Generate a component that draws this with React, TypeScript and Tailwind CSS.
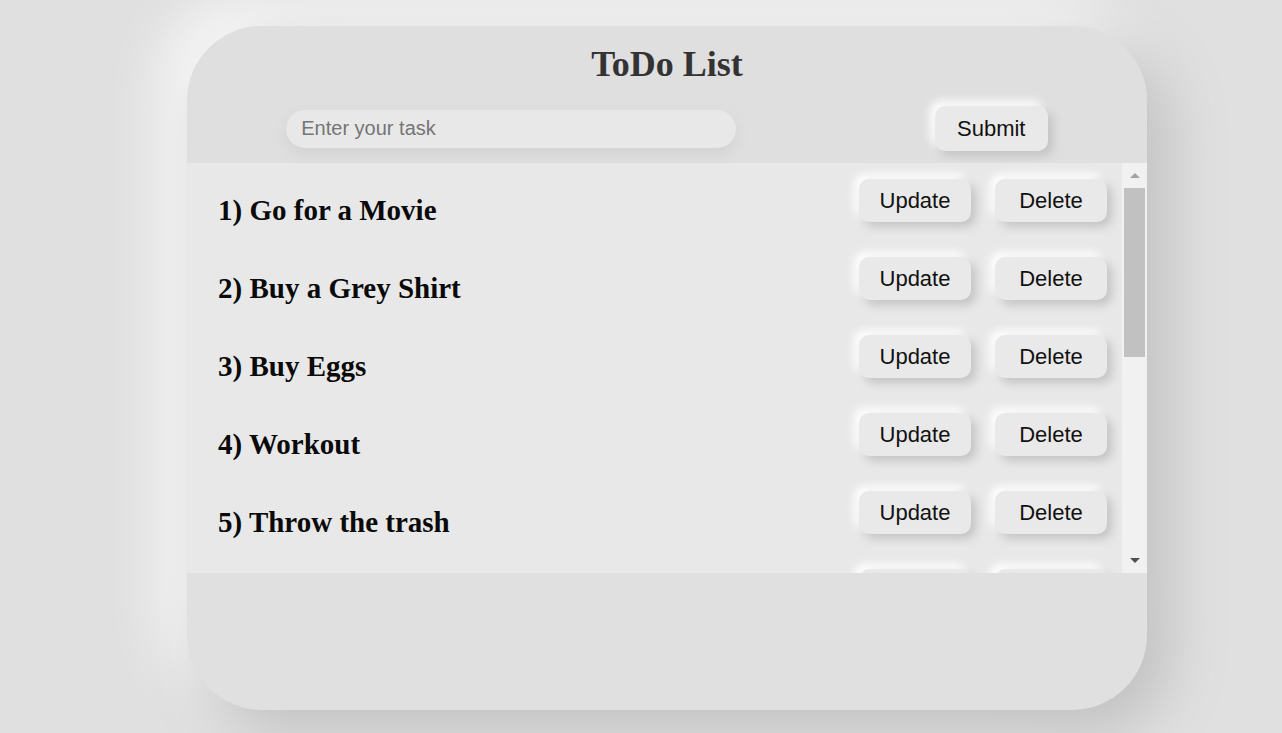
import React from "react";

const tasks = [
  "Go for a Movie",
  "Buy a Grey Shirt",
  "Buy Eggs",
  "Workout",
  "Throw the trash",
  "Read a Book",
];

function TaskRow({ n, text }: { n: number; text: string }) {
  return (
    <li className="flex h-[78px] shrink-0 justify-between pl-[31px] pr-[15px]">
      <h3 className="pt-[31px] font-['Liberation_Serif',serif] text-[29px] font-bold leading-[32px] text-[#0a0a0a]">
        {n}) {text}
      </h3>
      <div className="flex gap-[24px] pt-[16px]">
        <button className="h-[43px] w-[112px] rounded-[10px] bg-[#e9e9e9] font-['Liberation_Sans',sans-serif] text-[22px] text-[#111] shadow-[5px_5px_10px_#c4c4c4,-5px_-5px_10px_#ffffff]">
          Update
        </button>
        <button className="h-[43px] w-[112px] rounded-[10px] bg-[#e9e9e9] font-['Liberation_Sans',sans-serif] text-[22px] text-[#111] shadow-[5px_5px_10px_#c4c4c4,-5px_-5px_10px_#ffffff]">
          Delete
        </button>
      </div>
    </li>
  );
}

export default function App() {
  return (
    <div className="h-[733px] overflow-hidden bg-[#e0e0e0] pt-[26px]">
      <div className="ml-[187px] flex h-[684px] w-[960px] flex-col overflow-hidden rounded-[75px] bg-[#e0e0e0] shadow-[20px_20px_60px_#bebebe,-20px_-20px_60px_#ffffff]">
        {/* header */}
        <div className="flex flex-col bg-[#dfdfdf] pb-[12px] pt-[18px]">
          <h1 className="text-center font-['Liberation_Serif',serif] text-[36px] font-bold leading-[40px] text-[#333]">
            ToDo List
          </h1>
          <div className="mt-[22px] flex h-[45px] items-center justify-around">
            <input
              className="h-[38px] w-[450px] rounded-full bg-[#e8e8e8] px-[15px] font-['Liberation_Sans',sans-serif] text-[20px] text-[#222] shadow-[0_6px_14px_#d2d2d2] outline-none placeholder:text-[#757575]"
              placeholder="Enter your task"
            />
            <button className="h-[45px] w-[113px] rounded-[10px] bg-[#e9e9e9] font-['Liberation_Sans',sans-serif] text-[22px] text-[#111] shadow-[5px_5px_10px_#c4c4c4,-5px_-5px_10px_#ffffff]">
              Submit
            </button>
          </div>
        </div>

        {/* list + scrollbar */}
        <div className="flex h-[410px] bg-[#e8e8e8]">
          <ul className="flex flex-1 flex-col overflow-hidden">
            {tasks.map((t, i) => (
              <TaskRow key={t} n={i + 1} text={t} />
            ))}
          </ul>
          <div className="flex w-[25px] flex-col items-center bg-[#f1f1f1]">
            <div className="mt-[10px] h-0 w-0 border-x-[5px] border-b-[5px] border-x-transparent border-b-[#a3a3a3]" />
            <div className="mt-[10px] h-[169px] w-[21px] bg-[#c1c1c1]" />
            <div className="mt-auto mb-[10px] h-0 w-0 border-x-[5px] border-t-[5px] border-x-transparent border-t-[#505050]" />
          </div>
        </div>
      </div>
    </div>
  );
}
